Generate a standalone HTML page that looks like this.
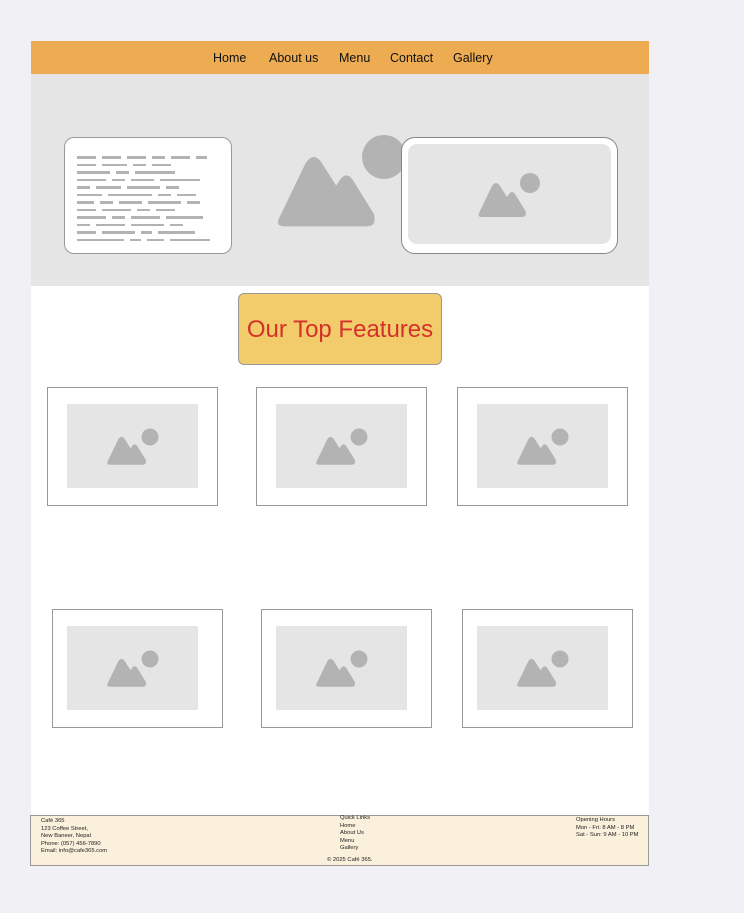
<!DOCTYPE html>
<html><head><meta charset="utf-8"><style>
*{margin:0;padding:0;box-sizing:border-box}
body{width:744px;height:913px;background:#f0f0f5;font-family:"Liberation Sans",Arial,sans-serif;position:relative;overflow:hidden}
.a{position:absolute}
.page{left:31px;top:41px;width:618px;height:825px;background:#fff}
nav{left:31px;top:41px;width:618px;height:33px;background:#edac52}
nav span{position:absolute;top:10px;font-size:12.5px;color:#111}
.hero{left:31px;top:74px;width:618px;height:212px;background:#e5e5e5}
.tcard{left:64px;top:137px;width:168px;height:117px;background:#fff;border:1px solid #999;border-radius:10px}
.bar{position:absolute;height:2.5px;background:#b3b3b3}
.rcard{left:401px;top:137px;width:217px;height:117px;background:#fff;border:1px solid #888;border-radius:14px}
.rin{position:absolute;left:6px;top:6px;right:6px;bottom:9px;background:#e5e5e5;border-radius:9px}
.title{left:238px;top:293px;width:204px;height:72px;background:#f2cb6b;border:1px solid #999;border-radius:6px;color:#d4312a;font-size:24px;text-align:center;line-height:72px}
.fc{width:171px;height:119px;border:1px solid #999;background:#fff}
.fc .in{position:absolute;top:16px;width:131px;height:84px;background:#e5e5e5}
footer{left:30px;top:815px;width:619px;height:51px;background:#faf0dc;border:1px solid #999;font-size:5.8px;color:#222;line-height:7.6px}
</style></head><body>
<div class="a page"></div>
<nav class="a"><span style="left:182px">Home</span><span style="left:238px">About us</span><span style="left:308px">Menu</span><span style="left:359px">Contact</span><span style="left:422px">Gallery</span></nav>
<div class="a hero"></div>
<div class="a tcard" id="tc"></div>
<svg class="a" style="left:270px;top:130px" width="140" height="100" viewBox="0 0 140 100">
<circle cx="114" cy="27" r="22" fill="#b3b3b3"/>
<path transform="translate(5,25) scale(1.02)" d="M4 62 L30 8 Q38 -4 46 8 L60 30 L64 24 Q70 16 76 24 L97 58 Q100 70 90 70 L10 70 Q0 70 4 62 Z" fill="#b3b3b3"/>
</svg>
<div class="a rcard"><div class="rin">
<svg class="a" style="left:68px;top:28px" width="70" height="50" viewBox="0 0 70 50">
<circle cx="54" cy="11" r="10" fill="#b3b3b3"/>
<path transform="translate(1,10) scale(0.5)" d="M4 62 L30 8 Q38 -4 46 8 L60 30 L64 24 Q70 16 76 24 L97 58 Q100 70 90 70 L10 70 Q0 70 4 62 Z" fill="#b3b3b3"/>
</svg></div></div>
<div class="a title">Our Top Features</div>
<div id="cards"></div>
<footer class="a">
<div class="a" style="left:10px;top:2px">Café 365<br>123 Coffee Street,<br>New Baneer, Nepal<br>Phone: (057) 456-7890<br>Email: info@cafe365.com</div>
<div class="a" style="left:309px;top:-1px">Quick Links<br>Home<br>About Us<br>Menu<br>Gallery</div>
<div class="a" style="left:545px;top:1px">Opening Hours<br>Mon - Fri: 8 AM - 8 PM<br>Sat - Sun: 9 AM - 10 PM</div>
<div class="a" style="left:296px;top:41px">© 2025 Café 365.</div>
</footer>
<script>
var tc=document.getElementById('tc');
var rows=[[19,19,19,13,19,11],[19,25,13,19],[33,13,40],[29,13,23,40],[13,25,33,13],[25,44,13,19],[17,13,23,33,13],[19,29,13,19],[29,13,29,37],[13,29,33,13],[19,33,11,37],[47,11,17,40]];
rows.forEach(function(r,i){var x=12;r.forEach(function(w){var b=document.createElement('div');b.className='bar';b.style.left=x+'px';b.style.top=(18+i*7.5)+'px';b.style.width=w+'px';tc.appendChild(b);x+=w+6;});});
var pos=[[47,387,19],[256,387,19],[457,387,19],[52,609,14],[261,609,14],[462,609,14]];
var h='';pos.forEach(function(p){h+='<div class="a fc" style="left:'+p[0]+'px;top:'+p[1]+'px"><div class="in" style="left:'+p[2]+'px"><svg class="a" style="left:38px;top:22px" width="60" height="45" viewBox="0 0 60 45"><circle cx="45" cy="11" r="8.5" fill="#b3b3b3"/><path transform="translate(1,10) scale(0.41)" d="M4 62 L30 8 Q38 -4 46 8 L60 30 L64 24 Q70 16 76 24 L97 58 Q100 70 90 70 L10 70 Q0 70 4 62 Z" fill="#b3b3b3"/></svg></div></div>';});
document.getElementById('cards').innerHTML=h;
</script>
</body></html>
